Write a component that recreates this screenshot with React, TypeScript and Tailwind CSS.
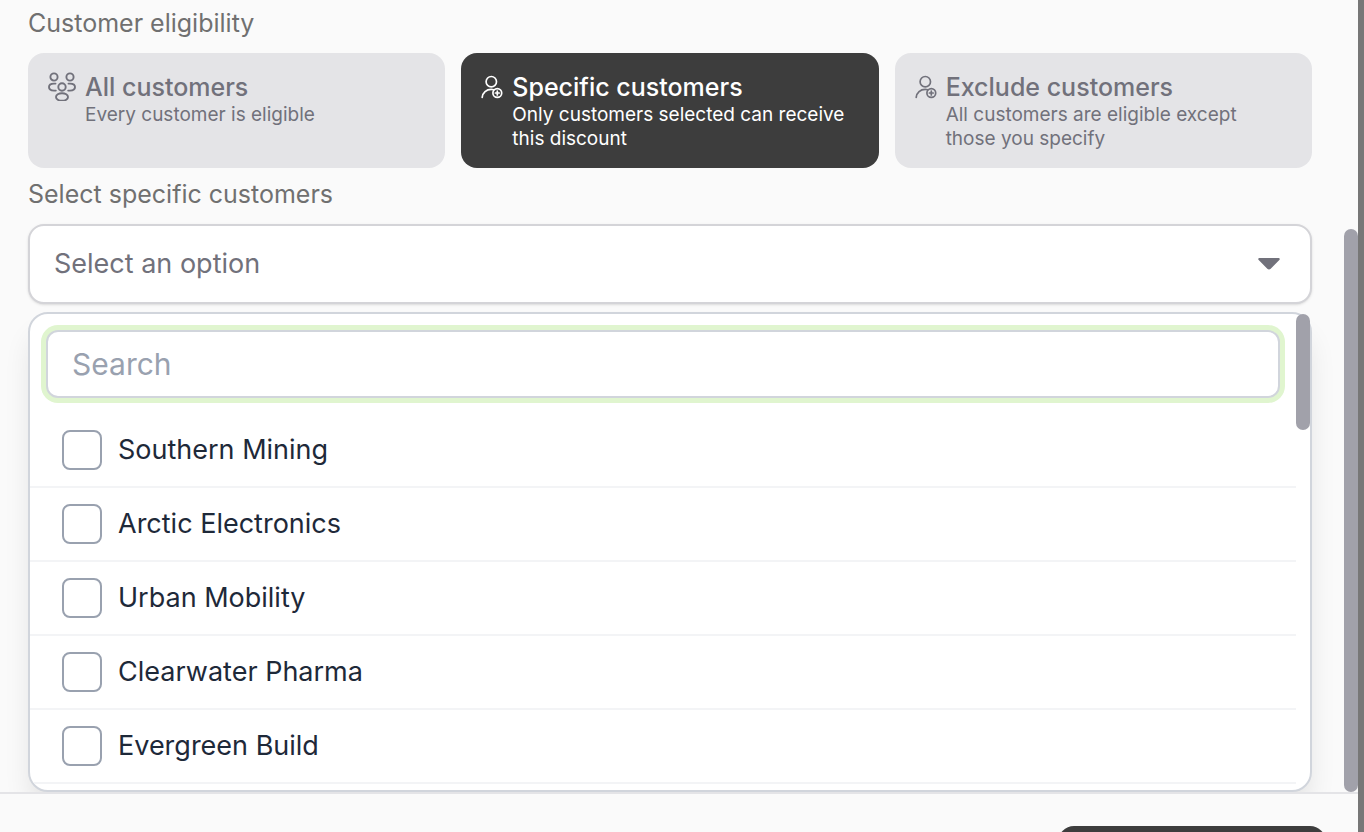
import React, { useState } from 'react';
import clsx from 'clsx';

const customers = [
  'Southern Mining',
  'Arctic Electronics',
  'Urban Mobility',
  'Clearwater Pharma',
  'Evergreen Build',
];

const GroupIcon = () => (
  <svg
    viewBox="0 -1 28 30"
    className="w-7 h-[30px] shrink-0"
    fill="none"
    stroke="currentColor"
    strokeWidth="1.9"
    strokeLinecap="round"
    aria-hidden="true"
  >
    <circle cx="6" cy="5" r="3.6" />
    <circle cx="22" cy="5" r="3.6" />
    <circle cx="14" cy="15" r="3.7" />
    <ellipse cx="14" cy="25" rx="6" ry="3.8" />
    <path d="M7.5 11.6H6C3 11.6 1 13 1 15.1s2 3.5 5 3.5h1.8" />
    <path d="M20.5 11.6H22c3 0 5 1.4 5 3.5s-2 3.5-5 3.5h-1.8" />
  </svg>
);

const UserPlusIcon = () => (
  <svg
    viewBox="0 0 22 30"
    className="w-[22px] h-[30px] shrink-0"
    fill="none"
    stroke="currentColor"
    strokeWidth="1.7"
    strokeLinecap="round"
    aria-hidden="true"
  >
    <circle cx="10.3" cy="10.7" r="5.2" />
    <path d="M1.2 26.4c.4-4.6 4.2-8 9-8 1 0 1.8.1 2.5.3" />
    <circle cx="16.3" cy="22" r="4.4" />
    <path d="M16.3 20.100v3.800M14.400 22h3.800" />
  </svg>
);

const options = [
  { id: 'all', title: 'All customers', text: 'Every customer is eligible', icon: GroupIcon },
  {
    id: 'specific',
    title: 'Specific customers',
    text: 'Only customers selected can receive this discount',
    icon: UserPlusIcon,
  },
  {
    id: 'exclude',
    title: 'Exclude customers',
    text: 'All customers are eligible except those you specify',
    icon: UserPlusIcon,
  },
];

const App = () => {
  const [eligibility, setEligibility] = useState('specific');
  const [search, setSearch] = useState('');

  const visible = customers.filter((name) => name.toLowerCase().includes(search.toLowerCase()));

  return (
    <div className="flex h-screen overflow-hidden bg-[#777777] pr-1.5 font-['Inter',sans-serif]">
      <div className="flex flex-1 min-w-0 flex-col bg-[#fafafa]">
        <main className="flex flex-1 min-h-0 overflow-hidden">
          <div className="flex-1 min-w-0 pl-7 pr-8 pt-[5px]">
            <h2 className="mb-3 text-[25px] leading-9 text-[#707070]">Customer eligibility</h2>

            <div className="grid grid-cols-3 gap-4">
              {options.map(({ id, title, text, icon: Icon }) => (
                <button
                  key={id}
                  type="button"
                  aria-pressed={eligibility === id}
                  onClick={() => setEligibility(id)}
                  className={clsx(
                    'flex items-start gap-[9px] rounded-2xl pl-5 pr-7 pt-[18px] pb-[17px] text-left',
                    eligibility === id ? 'bg-[#3d3d3d] text-white' : 'bg-zinc-200 text-zinc-500'
                  )}
                >
                  <Icon />
                  <span>
                    <span className="block text-[25px] leading-8 font-medium">{title}</span>
                    <span className="block text-[19px] leading-6">{text}</span>
                  </span>
                </button>
              ))}
            </div>

            <label htmlFor="customers" className="mt-2 mb-3 block text-[25px] leading-9 text-[#707070]">
              Select specific customers
            </label>

            <div className="relative">
              <select
                id="customers"
                className="block h-20 w-full appearance-none rounded-2xl border-2 border-zinc-300 bg-white px-6 text-[27px] text-zinc-500 shadow-sm outline-none"
              >
                <option>Select an option</option>
              </select>
              <svg
                viewBox="0 0 22 12"
                className="pointer-events-none absolute right-8 top-[34px] h-3 w-[22px] fill-zinc-500"
                aria-hidden="true"
              >
                <path d="M1.500 0h19c1.200 0 1.600 1.300.8 2.100l-8.600 8.600c-1 1-2.400 1-3.400 0L.7 2.100C-.1 1.300.3 0 1.500 0Z" />
              </svg>
            </div>

            {/* dropdown */}
            <div className="mt-2 flex rounded-[20px] border-2 border-gray-300 bg-white shadow-[0_20px_30px_-6px_rgba(0,0,0,0.12)]">
              <div className="flex-1 min-w-0 overflow-hidden rounded-l-[18px] pb-1.5">
                <div className="p-4">
                  <input
                    type="text"
                    aria-label="Search"
                    placeholder="Search"
                    value={search}
                    onChange={(e) => setSearch(e.target.value)}
                    className="block h-[68px] w-full rounded-xl border-2 border-gray-300 bg-white px-6 text-[30px] text-gray-800 outline-none ring-5 ring-[#e0f5cf] placeholder:text-gray-400"
                  />
                </div>
                <ul>
                  {visible.map((name) => (
                    <li key={name} className="border-b-2 border-gray-100">
                      <label className="flex h-[72px] items-center gap-4 px-8 text-[27px] text-gray-800">
                        <input
                          type="checkbox"
                          className="size-10 shrink-0 appearance-none rounded-lg border-2 border-gray-400 bg-white checked:bg-[#3d3d3d]"
                        />
                        {name}
                      </label>
                    </li>
                  ))}
                </ul>
              </div>
              <div className="w-3.5">
                <div className="h-[116px] rounded-full bg-[#a1a1aa]" />
              </div>
            </div>
          </div>

          <div className="flex w-3.5 flex-col pt-[229px]">
            <div className="flex-1 rounded-full bg-[#a1a1aa]" />
          </div>
        </main>

        <footer className="flex h-10 justify-end overflow-hidden border-t-2 border-zinc-200 pr-8 pt-8">
          <button type="button" aria-label="Save" className="h-20 w-[268px] shrink-0 rounded-2xl bg-[#3d3d3d]" />
        </footer>
      </div>
    </div>
  );
};

export default App;
